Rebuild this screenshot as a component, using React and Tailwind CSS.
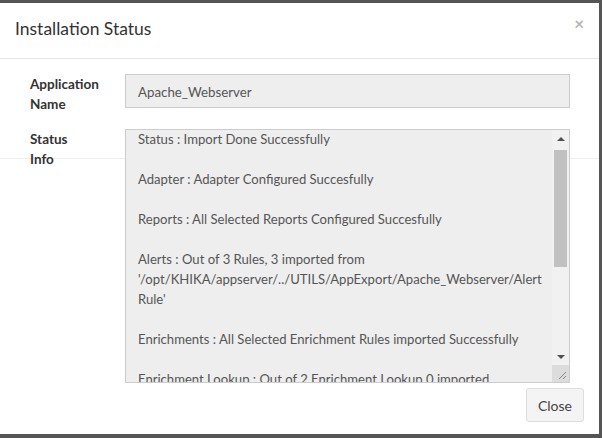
import React from 'react';

const LINES = [
  'Status : Import Done Successfully',
  '',
  'Adapter : Adapter Configured Succesfully',
  '',
  'Reports : All Selected Reports Configured Succesfully',
  '',
  'Alerts : Out of 3 Rules, 3 imported from',
  "'/opt/KHIKA/appserver/../UTILS/AppExport/Apache_Webserver/Alert",
  "Rule'",
  '',
  'Enrichments : All Selected Enrichment Rules imported Successfully',
  '',
  'Enrichment Lookup : Out of 2 Enrichment Lookup 0 imported',
];

export default function App() {
  return (
    <div
      className="w-[602px] h-[438px] bg-[#555] pt-[3px] pr-[3px] pb-[4px] overflow-hidden"
      style={{ fontFamily: 'Lato, "Open Sans", sans-serif' }}
    >
      <div className="relative h-full bg-white">
        {/* Header */}
        <div className="flex items-center justify-between h-[56px] pl-[15px] pr-[15px] border-b border-[#e5e5e5]">
          <h4 className="text-[17.5px] text-[#333] leading-none -mt-[3px]">Installation Status</h4>
          <span className="text-[#b5b5b5] text-[17px] font-bold leading-none -mt-[14px]">×</span>
        </div>

        {/* faint line behind the textarea */}
        <div className="absolute left-0 right-0 top-[155px] h-px bg-[#eeeeee]" />

        {/* Body */}
        <div className="relative flex flex-col gap-[21px] pt-[15px] pl-[30px] pr-[29px]">
          <div className="flex h-[34px]">
            <div className="w-[95px] text-[13.5px] font-bold text-[#333] leading-[20px]">
              Application<br />Name
            </div>
            <div className="w-[445px] h-[34px] bg-[#eeeeee] border border-[#cccccc] flex items-center pl-[12px] pt-[3px] text-[13.3px] text-[#555]">
              Apache_Webserver
            </div>
          </div>

          <div className="flex">
            <div className="w-[95px] text-[13.5px] font-bold text-[#333] leading-[20px]">
              Status<br />Info
            </div>
            <div className="relative w-[445px] h-[254px] bg-[#eeeeee] border border-[#cccccc] overflow-hidden">
              <div className="-mt-[1px] pl-[12px] text-[13.1px] text-[#555] leading-[20px] whitespace-nowrap">
                {LINES.map((l, i) => (
                  <div key={i} className="h-[20px]">{l}</div>
                ))}
              </div>
              {/* scrollbar */}
              <div className="absolute top-0 right-0 bottom-0 w-[17px] bg-[#f1f1f1] flex flex-col items-center">
                <div className="h-[17px] flex items-center justify-center">
                  <div className="w-0 h-0 border-l-[4px] border-r-[4px] border-b-[4px] border-l-transparent border-r-transparent border-b-[#505050]" />
                </div>
                <div className="w-[13px] h-[117px] mt-[3px] bg-[#c1c1c1]" />
                <div className="flex-1" />
                <div className="h-[17px] flex items-center justify-center mb-[17px]">
                  <div className="w-0 h-0 border-l-[4px] border-r-[4px] border-t-[4px] border-l-transparent border-r-transparent border-t-[#505050]" />
                </div>
              </div>
              {/* resizer */}
              <div className="absolute right-0 bottom-0 w-[17px] h-[17px] bg-[#dcdcdc]">
                <svg width="17" height="17" viewBox="0 0 17 17">
                  <path d="M14 7 L7 14 M14 11 L11 14" stroke="#888" strokeWidth="1" />
                </svg>
              </div>
            </div>
          </div>
        </div>

        {/* Footer */}
        <div className="flex justify-end pr-[15px] pt-[5px]">
          <button className="w-[58px] h-[34px] bg-[#f4f4f4] border border-[#dddddd] rounded-[3px] text-[14px] text-[#444]">
            Close
          </button>
        </div>
      </div>
    </div>
  );
}
